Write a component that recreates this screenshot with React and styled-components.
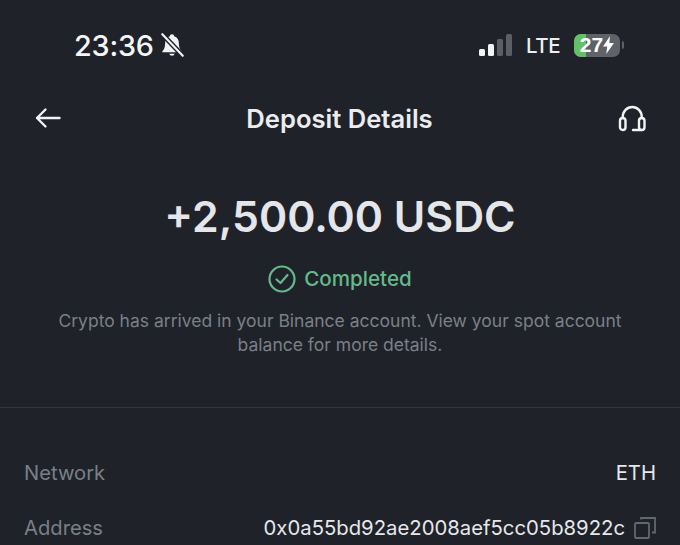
import React from 'react';
import styled, { createGlobalStyle } from 'styled-components';

const Global = createGlobalStyle`
  html, body { margin: 0; padding: 0; background: #1f2229; }
  body { font-family: Inter, "Liberation Sans", sans-serif; }
`;

const Screen = styled.div`
  width: 680px;
  height: 545px;
  overflow: hidden;
  background: #1f2229;
  display: flex;
  flex-direction: column;
`;

const StatusBar = styled.div`
  height: 32px;
  margin-top: 29px;
  padding: 0 56px 0 74px;
  display: flex;
  align-items: center;
  justify-content: space-between;
`;

const Side = styled.div`
  display: flex;
  align-items: center;
  gap: ${p => p.$gap || 0}px;
`;

const Time = styled.span`
  font-size: 28.8px;
  font-weight: 500;
  color: #f4f5f6;
  letter-spacing: -0.2px;
`;

const Lte = styled.span`
  font-size: 20.5px;
  font-weight: 500;
  letter-spacing: -0.5px;
  color: #eceef0;
`;

const Signal = styled.div`
  display: flex;
  align-items: flex-end;
  gap: 3px;
  height: 22px;
`;

const Bar = styled.i`
  display: block;
  width: 6px;
  border-radius: 1.5px;
  height: ${p => p.$h}px;
  background: ${p => (p.$on ? '#f2f3f4' : '#5b5e64')};
`;

const Battery = styled.div`
  position: relative;
  width: 46px;
  height: 23px;
  border-radius: 7px;
  overflow: hidden;
  background: #5f6268;
  display: flex;
  align-items: center;
  justify-content: center;
  color: #fff;
  font: 700 21px "Liberation Sans", sans-serif;
`;

const BatteryFill = styled.div`
  position: absolute;
  left: 0;
  top: 0;
  bottom: 0;
  width: 12px;
  background: #62c066;
`;

const BatteryText = styled.span`
  position: relative;
  display: flex;
  align-items: center;
`;

const BatteryCap = styled.i`
  display: block;
  width: 2px;
  height: 8px;
  margin-left: 2px;
  border-radius: 0 2px 2px 0;
  background: #5f6268;
`;

const Nav = styled.div`
  height: 40px;
  margin-top: 37px;
  padding: 0 33px 0 34px;
  display: flex;
  align-items: center;
  justify-content: space-between;
`;

const NavTitle = styled.h1`
  margin: 0;
  font-size: 25.6px;
  font-weight: 600;
  color: #eaecef;
`;

const Summary = styled.div`
  margin-top: 53px;
  display: flex;
  flex-direction: column;
  align-items: center;
  border-bottom: 1px solid #33363d;
  height: 216px;
`;

const Amount = styled.div`
  font-size: 42.8px;
  line-height: 52px;
  font-weight: 600;
  color: #e4e6ea;
`;

const Status = styled.div`
  margin-top: 21px;
  display: flex;
  align-items: center;
  gap: 8px;
  font-size: 20.6px;
  line-height: 30px;
  font-weight: 500;
  color: #65b98a;
`;

const Note = styled.p`
  margin: 15px 0 0;
  width: 600px;
  text-align: center;
  font-size: 17.5px;
  line-height: 24px;
  color: #7b8088;
`;

const Rows = styled.div`
  padding: 50px 24px 0;
  display: flex;
  flex-direction: column;
  gap: 26px;
`;

const Row = styled.div`
  height: 29px;
  display: flex;
  align-items: center;
  justify-content: space-between;
`;

const Label = styled.span`
  font-size: 20.2px;
  color: #7a7f87;
`;

const Value = styled.span`
  display: flex;
  align-items: center;
  gap: 9px;
  font-size: 20.3px;
  color: #e6e8eb;
`;

const BellOff = () => (
  <svg width="28" height="28" viewBox="0 0 26 26" style={{ marginLeft: 4 }}>
    <path d="M13 3c-1.2 0-2 .8-2 1.8C7.900 5.700 6.600 8.400 6.600 11.500c0 3.600-1 5.600-2.600 7.300v1h18v-1c-1.600-1.700-2.600-3.700-2.600-7.300 0-3.100-1.300-5.800-4.400-6.700C15 3.800 14.200 3 13 3z" fill="#f2f3f4" />
    <path d="M10.500 21.200a2.600 2.600 0 0 0 5 0z" fill="#f2f3f4" />
    <path d="M4 3l19 20" stroke="#1f2229" strokeWidth="4.500" />
    <path d="M4 3l19 20" stroke="#f2f3f4" strokeWidth="2" strokeLinecap="round" />
  </svg>
);

const Bolt = () => (
  <svg width="11" height="18" viewBox="0 0 11 18">
    <path d="M7 0L0 10.500h4.200L3.200 18 11 7H6.300z" fill="#fff" />
  </svg>
);

const ArrowBack = () => (
  <svg width="28" height="24" viewBox="0 0 28 24" fill="none" stroke="#f0f1f3" strokeWidth="2.400" strokeLinecap="round" strokeLinejoin="round">
    <path d="M25.500 12H3M11.500 3.500L3 12l8.500 8.500" />
  </svg>
);

const Headset = () => (
  <svg width="30" height="30" viewBox="0 0 30 30" fill="none" stroke="#f2f3f4" strokeWidth="2.400" strokeLinecap="round" strokeLinejoin="round">
    <path d="M5.750 15v-1a9.500 10 0 0 1 19 0v1" />
    <rect x="3" y="15" width="5.500" height="12" rx="2.750" />
    <rect x="22" y="15" width="5.500" height="12" rx="2.750" />
    <path d="M24 27H16" />
  </svg>
);

const CheckCircle = () => (
  <svg width="28" height="28" viewBox="0 0 28 28" fill="none" stroke="#65b98a" strokeWidth="2.200" strokeLinecap="round" strokeLinejoin="round">
    <circle cx="14" cy="14" r="12.500" />
    <path d="M8.500 14.500l4 3.500 7-8" />
  </svg>
);

const Copy = () => (
  <svg width="22" height="22" viewBox="0 0 22 22" fill="none" stroke="#63676e" strokeWidth="1.800">
    <rect x="1" y="6" width="14" height="15" rx="1" />
    <path d="M7 2.500V1h14v14.500h-3" />
  </svg>
);

export default function App() {
  return (
    <Screen>
      <Global />
      <StatusBar>
        <Side>
          <Time>23:36</Time>
          <BellOff />
        </Side>
        <Side $gap={14}>
          <Signal>
            <Bar $on $h={7} />
            <Bar $on $h={12} />
            <Bar $h={17} />
            <Bar $h={22} />
          </Signal>
          <Lte>LTE</Lte>
          <Side>
            <Battery>
              <BatteryFill />
              <BatteryText>27<Bolt /></BatteryText>
            </Battery>
            <BatteryCap />
          </Side>
        </Side>
      </StatusBar>
      <Nav>
        <ArrowBack />
        <NavTitle>Deposit Details</NavTitle>
        <Headset />
      </Nav>
      <Summary>
        <Amount>+2,500.00 USDC</Amount>
        <Status>
          <CheckCircle />
          Completed
        </Status>
        <Note>
          Crypto has arrived in your Binance account. View your spot account balance for more details.
        </Note>
      </Summary>
      <Rows>
        <Row>
          <Label>Network</Label>
          <Value>ETH</Value>
        </Row>
        <Row>
          <Label>Address</Label>
          <Value>0x0a55bd92ae2008aef5cc05b8922c <Copy /></Value>
        </Row>
      </Rows>
    </Screen>
  );
}
